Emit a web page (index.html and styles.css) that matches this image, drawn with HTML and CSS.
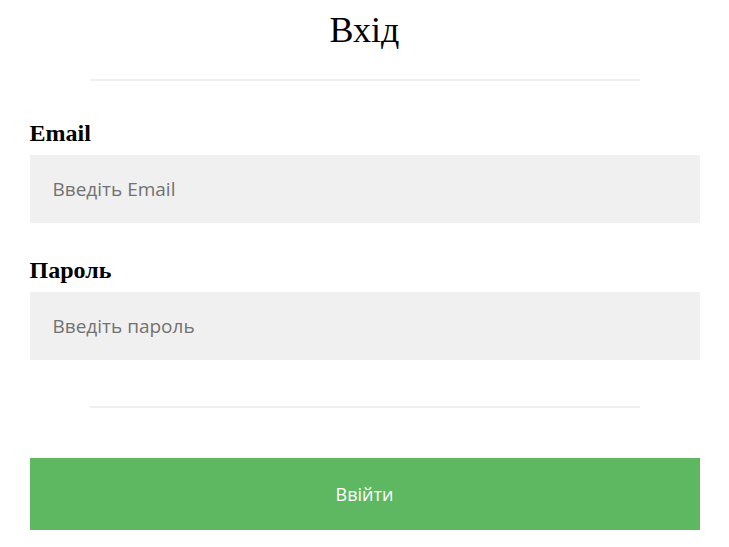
FILE: index.html
```html
<!DOCTYPE html>
<html lang="uk">
<head>
<meta charset="utf-8">
<title>Вхід</title>
<link rel="stylesheet" href="styles.css">
</head>
<body>
<div class="container">
  <h1 class="title">Вхід</h1>
  <hr class="divider">
  <form class="form">
    <div class="field">
      <label class="label" for="email">Email</label>
      <input class="input" id="email" type="email" placeholder="Введіть Email">
    </div>
    <div class="field">
      <label class="label" for="password">Пароль</label>
      <input class="input" id="password" type="password" placeholder="Введіть пароль">
    </div>
    <hr class="divider divider-bottom">
    <button class="button" type="submit">Ввійти</button>
  </form>
</div>
</body>
</html>
```

FILE: styles.css
```css
html, body {
  margin: 0;
  padding: 0;
  background: #fff;
}
.container {
  width: 670px;
  margin: 0 auto;
  padding-top: 10px;
  font-family: "Liberation Serif", serif;
}
.title {
  margin: 0;
  text-align: center;
  font-weight: normal;
  font-size: 36px;
  line-height: 40px;
}
.divider {
  width: 550px;
  height: 2px;
  margin: 29px auto 0;
  border: 0;
  background: #efefef;
}
.form {
  display: flex;
  flex-direction: column;
}
.field {
  display: flex;
  flex-direction: column;
  margin-top: 38px;
}
.field + .field {
  margin-top: 33px;
}
.label {
  font-weight: bold;
  font-size: 24px;
  line-height: 28px;
  margin-bottom: 8px;
}
.input {
  box-sizing: border-box;
  height: 68px;
  border: 0;
  background: #f0f0f0;
  padding: 0 23px;
  font-family: "Open Sans", sans-serif;
  font-size: 19px;
  color: #333;
  outline: none;
}
.input::placeholder {
  color: #727272;
}
.divider-bottom {
  margin-top: 46px;
}
.button {
  margin-top: 50px;
  height: 72px;
  border: 0;
  background: #5eb862;
  color: #fff;
  font-family: "Open Sans", sans-serif;
  font-size: 18px;
  cursor: pointer;
}
```
